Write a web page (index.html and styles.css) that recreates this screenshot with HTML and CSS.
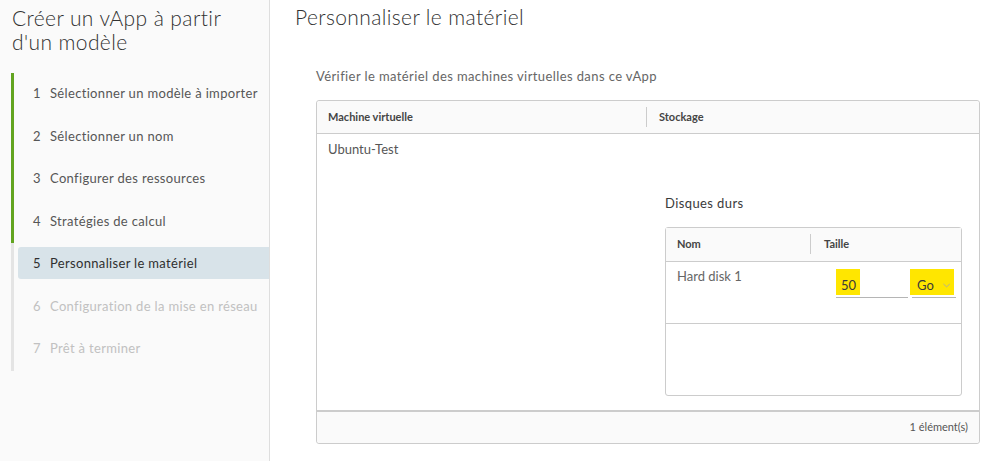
FILE: index.html
```html
<!DOCTYPE html>
<html lang="fr">
<head>
<meta charset="utf-8">
<title>Créer un vApp à partir d'un modèle</title>
<link rel="stylesheet" href="styles.css">
</head>
<body>
<div class="wizard">
  <aside class="sidebar">
    <h1 class="wiz-title">Créer un vApp à partir d'un modèle</h1>
    <ol class="steps">
      <li class="step done"><div class="step-row"><span class="num">1</span>Sélectionner un modèle à importer</div></li>
      <li class="step done"><div class="step-row"><span class="num">2</span>Sélectionner un nom</div></li>
      <li class="step done"><div class="step-row"><span class="num">3</span>Configurer des ressources</div></li>
      <li class="step done"><div class="step-row"><span class="num">4</span>Stratégies de calcul</div></li>
      <li class="step current"><div class="step-row active"><span class="num">5</span>Personnaliser le matériel</div></li>
      <li class="step todo"><div class="step-row"><span class="num">6</span>Configuration de la mise en réseau</div></li>
      <li class="step todo"><div class="step-row"><span class="num">7</span>Prêt à terminer</div></li>
    </ol>
  </aside>
  <main class="content">
    <h2 class="page-title">Personnaliser le matériel</h2>
    <div class="page-body">
      <p class="desc">Vérifier le matériel des machines virtuelles dans ce vApp</p>
      <div class="grid">
        <div class="grid-head">
          <div class="col col-vm">Machine virtuelle</div>
          <div class="col col-st"><span class="sep"></span>Stockage</div>
        </div>
        <div class="grid-body">
          <div class="row">
            <div class="cell cell-vm">Ubuntu-Test</div>
            <div class="cell cell-st">
              <div class="disks">
                <h3 class="disks-title">Disques durs</h3>
                <div class="subgrid">
                  <div class="sub-head">
                    <div class="scol scol-name">Nom</div>
                    <div class="scol scol-size"><span class="sep sep-sub"></span>Taille</div>
                  </div>
                  <div class="sub-row">
                    <div class="scell scell-name">Hard disk 1</div>
                    <div class="scell scell-size">
                      <div class="input-wrap"><span class="hl">50</span></div>
                      <div class="select-wrap"><span class="hl hl-sel">Go<svg class="chev" width="8" height="5" viewBox="0 0 8 5"><path d="M0.5 0.8 L4 4 L7.5 0.8" fill="none" stroke="#a8a8a8" stroke-width="1"/></svg></span></div>
                    </div>
                  </div>
                </div>
              </div>
            </div>
          </div>
        </div>
        <div class="grid-foot">1 élément(s)</div>
      </div>
    </div>
  </main>
</div>
</body>
</html>
```
FILE: styles.css
```css
* { box-sizing: border-box; }
html, body { margin: 0; padding: 0; }
body {
  font-family: Lato, "Open Sans", "Liberation Sans", sans-serif;
  color: #565656;
  background: #fff;
}
.wizard {
  display: flex;
  height: 461px;
  overflow: hidden;
}
.sidebar {
  width: 270px;
  flex: none;
  background: #fafafa;
  border-right: 1px solid #dedede;
  padding: 6px 0 0 0;
}
.wiz-title {
  margin: 0 0 0 12px;
  font-size: 21px;
  font-weight: 300;
  line-height: 24px;
  letter-spacing: 0.4px;
  color: #313131;
  width: 240px;
}
.steps {
  list-style: none;
  margin: 19px 0 0 11px;
  padding: 0;
}
.step {
  border-left: 3px solid #e4e4e4;
  padding: 4px 0 6.5px 4px;
  font-size: 13px;
}
.step.done { border-left-color: #62a420; }
.step-row {
  height: 32px;
  line-height: 32px;
  padding-left: 15px;
  color: #565656;
  border-radius: 3px 0 0 3px;
  white-space: nowrap;
  letter-spacing: 0.33px;
}
.step-row.active {
  background: #d8e3e9;
  color: #2f2f2f;
}
.step.todo .step-row { color: #c1c1c1; }
.num {
  display: inline-block;
  width: 17px;
  letter-spacing: 0;
}
.content {
  flex: 1;
  padding: 0 0 0 25px;
}
.page-title {
  margin: 4px 0 0 0;
  font-size: 21px;
  font-weight: 300;
  line-height: 26px;
  letter-spacing: 0.38px;
  color: #313131;
}
.page-body {
  padding-left: 21px;
  width: 685px;
}
.desc {
  margin: 37px 0 0 0;
  font-size: 13px;
  line-height: 18px;
  letter-spacing: 0.4px;
  color: #666;
}
.grid {
  margin-top: 15px;
  border: 1px solid #ccc;
  border-radius: 3px;
  width: 664px;
  display: flex;
  flex-direction: column;
  height: 344px;
}
.grid-head {
  display: flex;
  height: 33px;
  background: #fafafa;
  border-bottom: 1px solid #ccc;
  border-radius: 3px 3px 0 0;
  font-size: 11px;
  font-weight: 700;
  color: #454545;
}
.col {
  position: relative;
  line-height: 32px;
}
.col-vm { width: 329px; padding-left: 11px; }
.col-st { flex: 1; padding-left: 13px; }
.sep {
  position: absolute;
  left: 0;
  top: 6px;
  width: 1px;
  height: 20px;
  background: #ccc;
}
.grid-body {
  flex: 1;
  background: #fff;
}
.row { display: flex; }
.cell { font-size: 13px; }
.cell-vm {
  width: 329px;
  padding: 6px 0 0 11px;
  line-height: 18px;
}
.cell-st {
  flex: 1;
  padding: 60px 17px 0 19px;
}
.disks-title {
  margin: 0;
  font-size: 13px;
  font-weight: 400;
  line-height: 18px;
  letter-spacing: 0.4px;
  color: #3a3a3a;
}
.subgrid {
  margin-top: 15px;
  border: 1px solid #ccc;
  border-radius: 3px;
  height: 169px;
}
.sub-head {
  display: flex;
  height: 34px;
  background: #fafafa;
  border-bottom: 1px solid #ccc;
  font-size: 11px;
  font-weight: 700;
  color: #454545;
}
.scol { position: relative; line-height: 32px; }
.scol-name { width: 144px; padding-left: 11px; }
.scol-size { flex: 1; padding-left: 14px; }
.sep-sub { top: 6px; height: 20px; }
.sub-row {
  display: flex;
  height: 62px;
  border-bottom: 1px solid #ccc;
}
.scell { font-size: 13px; }
.scell-name {
  width: 144px;
  padding: 5px 0 0 11px;
  line-height: 18px;
  color: #666;
}
.scell-size {
  flex: 1;
  display: flex;
  padding: 7px 0 0 26px;
}
.input-wrap {
  width: 72px;
  height: 29px;
  border-bottom: 1px solid #b5b5b5;
}
.select-wrap {
  margin-left: 4px;
  width: 44px;
  height: 29px;
  border-bottom: 1px solid #b5b5b5;
}
.hl {
  display: inline-flex;
  align-items: center;
  height: 26px;
  background: #ffe600;
  color: #3a3a3a;
  padding: 6px 4px 0 5px;
  font-size: 13px;
}
.hl-sel {
  width: 44px;
  margin-left: -2px;
  padding-left: 7px;
}
.chev { margin-left: 9px; margin-top: 0; }
.grid-foot {
  height: 33px;
  border-top: 2px solid #ccc;
  background: #fafafa;
  text-align: right;
  padding-right: 11px;
  font-size: 11px;
  line-height: 30px;
  color: #565656;
  border-radius: 0 0 3px 3px;
}
```
